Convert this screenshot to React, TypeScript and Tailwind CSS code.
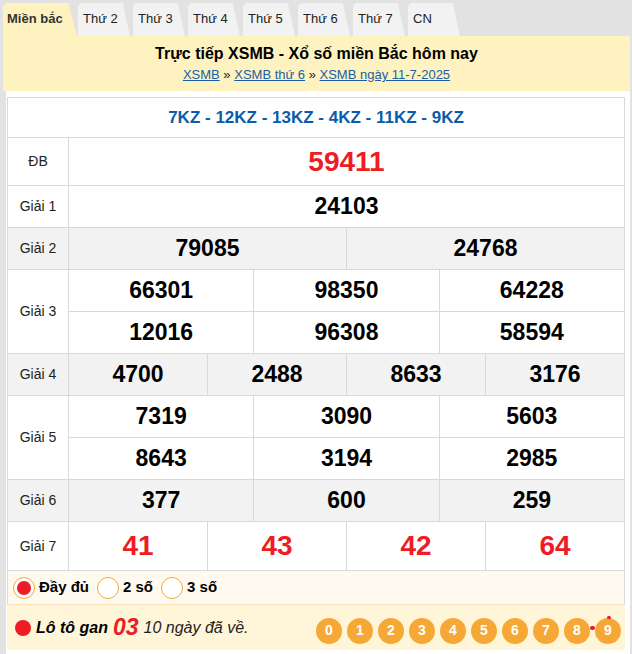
import React from 'react'

const tabs = ['Thứ 2', 'Thứ 3', 'Thứ 4', 'Thứ 5', 'Thứ 6', 'Thứ 7', 'CN']

function Label({ children }: { children: React.ReactNode }) {
  return (
    <div className="w-[61px] shrink-0 border-r border-[#d9d9d9] flex items-center justify-center text-[14px] text-[#222]">
      {children}
    </div>
  )
}

function Cells({ values, red = false, size = 'text-[22px]' }: { values: string[]; red?: boolean; size?: string }) {
  return (
    <div className="flex-1 flex">
      {values.map((v, i) => (
        <div
          key={i}
          className={`flex-1 flex items-center justify-center font-bold ${size} ${red ? 'text-[#ee1c25]' : 'text-black'} ${i > 0 ? 'border-l border-[#d9d9d9]' : ''}`}
        >
          {v}
        </div>
      ))}
    </div>
  )
}

function Row({ label, rows, gray = false, h, red = false, size }: { label: string; rows: string[][]; gray?: boolean; h: string; red?: boolean; size?: string }) {
  return (
    <div className={`flex border-b border-[#d9d9d9] ${h} ${gray ? 'bg-[#f2f2f2]' : 'bg-white'}`}>
      <Label>{label}</Label>
      <div className="flex-1 flex flex-col">
        {rows.map((r, i) => (
          <div key={i} className={`flex-1 flex ${i < rows.length - 1 ? 'border-b border-[#d9d9d9]' : ''}`}>
            <Cells values={r} red={red} size={size} />
          </div>
        ))}
      </div>
    </div>
  )
}

function Radio({ checked, label }: { checked?: boolean; label: string }) {
  return (
    <div className="flex items-center gap-[4px] mr-[8px]">
      <span className="w-[22px] h-[22px] rounded-full border border-[#f6a836] bg-white flex items-center justify-center">
        {checked && <span className="w-[14px] h-[14px] rounded-full bg-[#ee1c25]" />}
      </span>
      <span className="font-bold text-[15px] text-black">{label}</span>
    </div>
  )
}

export default function App() {
  return (
    <div className="w-[632px] h-[654px] overflow-hidden bg-[#e2e2e2] font-['Liberation_Sans',Arial,sans-serif]">
      {/* tabs */}
      <div className="h-[36px] flex items-end pl-[3px]">
        <div className="w-[74px] h-[33px] bg-[#fef3c0] rounded-tl-[5px] [clip-path:polygon(0_0,88%_0,100%_100%,0_100%)] flex items-center pl-[4px] pb-[1px] text-[13px] font-bold text-[#333]">
          Miền bắc
        </div>
        {tabs.map((t, i) => (
          <div
            key={t}
            className={`${i === 0 ? 'ml-[1px]' : 'ml-[3px]'} w-[52px] h-[33px] bg-[#f2f2f2] rounded-tl-[5px] [clip-path:polygon(0_0,86%_0,100%_100%,0_100%)] flex items-center pl-[5px] pb-[1px] text-[13px] text-[#222]`}
          >
            {t}
          </div>
        ))}
      </div>

      <div className="ml-[3px] w-[627px] h-[618px] flex flex-col">
        <div className="h-[55px] bg-[#fef3c0] flex flex-col items-center pt-[8px]">
          <h1 className="text-[16px] font-bold text-black leading-[20px]">Trực tiếp XSMB - Xổ số miền Bắc hôm nay</h1>
          <div className="text-[13px] leading-[18px] mt-[2px] text-[#222]">
            <a className="text-[#1a5ea8] underline">XSMB</a> » <a className="text-[#1a5ea8] underline">XSMB thứ 6</a> »{' '}
            <a className="text-[#1a5ea8] underline">XSMB ngày 11-7-2025</a>
          </div>
        </div>

        <div className="flex-1 ml-[3px] bg-white pl-px pr-[5px] pt-[6px]">
          <div className="border-x border-t border-[#d9d9d9]">
            <div className="h-[40px] border-b border-[#d9d9d9] flex items-center justify-center text-[17px] font-bold text-[#0b5ca8]">
              7KZ - 12KZ - 13KZ - 4KZ - 11KZ - 9KZ
            </div>
            <Row label="ĐB" rows={[['59411']]} h="h-[48px]" red size="text-[28px]" />
            <Row label="Giải 1" rows={[['24103']]} h="h-[42px]" size="text-[23px]" />
            <Row label="Giải 2" rows={[['79085', '24768']]} h="h-[42px]" gray size="text-[23px]" />
            <Row label="Giải 3" rows={[['66301', '98350', '64228'], ['12016', '96308', '58594']]} h="h-[84px]" size="text-[23px]" />
            <Row label="Giải 4" rows={[['4700', '2488', '8633', '3176']]} h="h-[42px]" gray size="text-[23px]" />
            <Row label="Giải 5" rows={[['7319', '3090', '5603'], ['8643', '3194', '2985']]} h="h-[84px]" size="text-[23px]" />
            <Row label="Giải 6" rows={[['377', '600', '259']]} h="h-[42px]" gray size="text-[23px]" />
            <Row label="Giải 7" rows={[['41', '43', '42', '64']]} h="h-[49px]" red size="text-[28px]" />
            <div className="h-[34px] bg-[#fffaf0] border-b border-[#fde3c0] flex items-center pl-[5px]">
              <Radio checked label="Đầy đủ" />
              <Radio label="2 số" />
              <Radio label="3 số" />
            </div>
          </div>
          <div className="h-[45px] bg-[#fff6da] flex items-center pl-[8px] pr-[4px]">
            <span className="w-[16px] h-[16px] rounded-full bg-[#ee1c25] mr-[5px]" />
            <span className="italic font-bold text-[16px] text-black">Lô tô gan</span>
            <span className="italic font-bold text-[23px] text-[#ee1c25] ml-[5px]">03</span>
            <span className="italic text-[16px] text-[#222] ml-[5px]">10 ngày đã về.</span>
            <div className="ml-auto flex gap-[5px] mt-[6px] relative">
              {['0', '1', '2', '3', '4', '5', '6', '7', '8', '9'].map((n) => (
                <span key={n} className="w-[26px] h-[26px] rounded-full bg-[#f6a836] text-white font-bold text-[14px] flex items-center justify-center">
                  {n}
                </span>
              ))}
              <span className="absolute right-[26px] top-[8px] w-[5px] h-[4px] rounded-[2px] bg-[#ee1c25]" />
              <span className="absolute right-[10px] top-[-2px] w-[4px] h-[3px] rounded-[2px] bg-[#ee1c25]" />
            </div>
          </div>
        </div>
      </div>
    </div>
  )
}
